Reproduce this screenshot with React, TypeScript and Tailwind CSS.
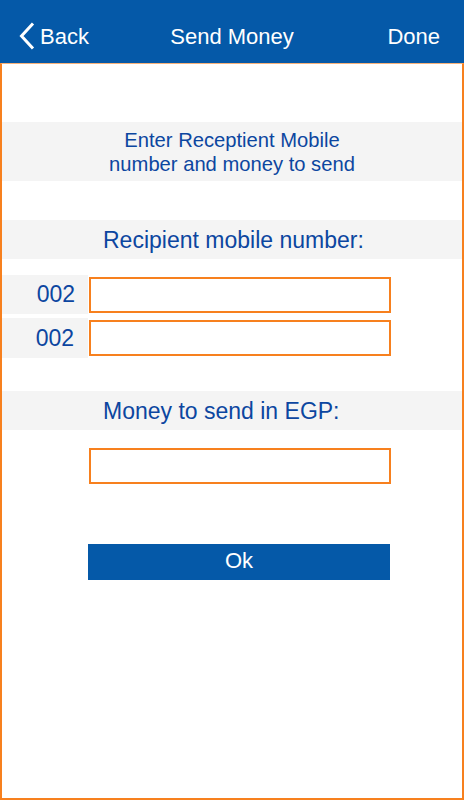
import React from "react";

const font = { fontFamily: '"Liberation Sans", Arial, Helvetica, sans-serif' };

function Chevron() {
  return (
    <svg width="16" height="28" viewBox="0 0 16 28" className="block">
      <polyline
        points="14,1.5 2.5,14 14,26.5"
        fill="none"
        stroke="white"
        strokeWidth="3"
        strokeLinecap="butt"
        strokeLinejoin="miter"
      />
    </svg>
  );
}

function Input() {
  return <div className="w-[302px] h-[36px] bg-white border-2 border-[#f7801e]" />;
}

export default function App() {
  return (
    <div className="w-[464px] h-[800px] flex flex-col bg-white" style={font}>
      <div className="h-[63px] shrink-0 bg-[#0559a8] grid grid-cols-[1fr_auto_1fr] items-center pt-[9px] px-[19px] text-white text-[22px]">
        <div className="flex items-center gap-[5px]">
          <Chevron />
          <span>Back</span>
        </div>
        <div>Send Money</div>
        <div className="text-right pr-[5px]">Done</div>
      </div>
      <div className="flex-1 flex flex-col border-x-2 border-b-2 border-t border-x-[#f7801e] border-b-[#f7801e] border-t-[#f7b27a]">
        <div className="h-[58px]" />
        <div className="h-[59px] bg-[#f4f4f4] flex items-center justify-center text-[#0c46a0]">
          <div className="text-[20.2px] leading-[24px] text-center">
            Enter Receptient Mobile
            <br />
            number and money to send
          </div>
        </div>
        <div className="h-[39px]" />
        <div className="h-[39px] bg-[#f4f4f4] flex items-center pl-[101px] text-[#0c46a0]">
          <div className="text-[23px] leading-[28px]">Recipient mobile number:</div>
        </div>
        <div className="h-[16px]" />
        <div className="h-[39px] flex items-center">
          <div className="w-[86px] h-full bg-[#f4f4f4] flex items-center justify-end pr-[13px] text-[23px] text-[#0c46a0]">
            002
          </div>
          <div className="ml-[1px]">
            <Input />
          </div>
        </div>
        <div className="h-[4px]" />
        <div className="h-[40px] flex items-center">
          <div className="w-[86px] h-full bg-[#f4f4f4] flex items-center justify-end pr-[14px] text-[23px] text-[#0c46a0]">
            002
          </div>
          <div className="ml-[1px]">
            <Input />
          </div>
        </div>
        <div className="h-[33px]" />
        <div className="h-[39px] bg-[#f4f4f4] flex items-center pl-[101px] text-[#0c46a0]">
          <div className="text-[23px] leading-[28px]">Money to send in EGP:</div>
        </div>
        <div className="h-[18px]" />
        <div className="pl-[87px]">
          <Input />
        </div>
        <div className="h-[60px]" />
        <div className="pl-[86px]">
          <button className="w-[302px] h-[36px] bg-[#0559a8] text-white text-[22px] flex items-center justify-center pb-[3px]">
            Ok
          </button>
        </div>
      </div>
    </div>
  );
}
